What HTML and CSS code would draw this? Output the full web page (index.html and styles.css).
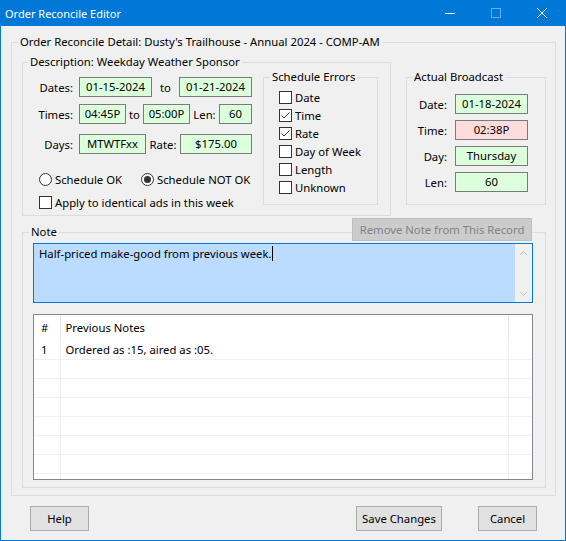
FILE: index.html
```
<!DOCTYPE html>
<html>
<head>
    <link rel="stylesheet" href="styles.css">
</head>
<body>
    <div class="window">
        <div class="titlebar">
            <span class="title">Order Reconcile Editor</span>
            <div class="caption-buttons">
                <span class="cap-btn">
                    <svg width="10" height="10" viewBox="0 0 10 10"><path d="M0 5.5H10" stroke="#fff" stroke-width="1"/></svg>
                </span>
                <span class="cap-btn">
                    <svg width="10" height="10" viewBox="0 0 10 10"><rect x="0.5" y="0.5" width="9" height="9" fill="none" stroke="#66aee7" stroke-width="1"/></svg>
                </span>
                <span class="cap-btn">
                    <svg width="10" height="10" viewBox="0 0 10 10"><path d="M0 0L10 10M10 0L0 10" stroke="#fff" stroke-width="1"/></svg>
                </span>
            </div>
        </div>

        <div class="client">
            <fieldset class="group outer">
                <legend>Order Reconcile Detail: Dusty's Trailhouse - Annual 2024 - COMP-AM</legend>

                <div class="top-row">
                    <fieldset class="group description">
                        <legend>Description: Weekday Weather Sponsor</legend>
                        <div class="desc-body">
                            <div class="schedule">
                                <div class="field-row row-dates">
                                    <span class="lbl">Dates:</span>
                                    <span class="field w73">01-15-2024</span>
                                    <span class="mid w27">to</span>
                                    <span class="field w73">01-21-2024</span>
                                </div>
                                <div class="field-row row-times">
                                    <span class="lbl">Times:</span>
                                    <span class="field w47">04:45P</span>
                                    <span class="mid w17">to</span>
                                    <span class="field w47">05:00P</span>
                                    <span class="mid w29">Len:</span>
                                    <span class="field w33">60</span>
                                </div>
                                <div class="field-row row-days">
                                    <span class="lbl">Days:</span>
                                    <span class="field w67">MTWTFxx</span>
                                    <span class="mid w34">Rate:</span>
                                    <span class="field w72">$175.00</span>
                                </div>

                                <div class="radios">
                                    <label class="radio first"><span class="dot"></span>Schedule OK</label>
                                    <label class="radio"><span class="dot checked"></span>Schedule NOT OK</label>
                                </div>
                                <label class="check apply"><span class="box"></span>Apply to identical ads in this week</label>
                            </div>

                            <fieldset class="group errors">
                                <legend>Schedule Errors</legend>
                                <label class="check"><span class="box"></span>Date</label>
                                <label class="check"><span class="box checked"><svg width="11" height="11" viewBox="0 0 11 11"><path d="M1.5 5.5L4 8L9.5 2.5" fill="none" stroke="#3c3c3c" stroke-width="1"/></svg></span>Time</label>
                                <label class="check"><span class="box checked"><svg width="11" height="11" viewBox="0 0 11 11"><path d="M1.5 5.5L4 8L9.5 2.5" fill="none" stroke="#3c3c3c" stroke-width="1"/></svg></span>Rate</label>
                                <label class="check"><span class="box"></span>Day of Week</label>
                                <label class="check"><span class="box"></span>Length</label>
                                <label class="check"><span class="box"></span>Unknown</label>
                            </fieldset>
                        </div>
                    </fieldset>

                    <fieldset class="group broadcast">
                        <legend>Actual Broadcast</legend>
                        <div class="field-row">
                            <span class="lbl">Date:</span>
                            <span class="field w73">01-18-2024</span>
                        </div>
                        <div class="field-row">
                            <span class="lbl">Time:</span>
                            <span class="field w73 bad">02:38P</span>
                        </div>
                        <div class="field-row">
                            <span class="lbl">Day:</span>
                            <span class="field w73">Thursday</span>
                        </div>
                        <div class="field-row">
                            <span class="lbl">Len:</span>
                            <span class="field w73">60</span>
                        </div>
                    </fieldset>
                </div>

                <div class="note-tools">
                    <button class="btn remove" disabled>Remove Note from This Record</button>
                </div>

                <fieldset class="group note">
                    <legend>Note</legend>
                    <div class="note-box">
                        <div class="note-text"><span class="caret">Half-priced make-good from previous week.</span></div>
                        <div class="scrollbar">
                            <svg width="9" height="6" viewBox="0 0 9 6"><path d="M1 5L4.5 1.5L8 5" fill="none" stroke="#c0c0c0" stroke-width="1"/></svg>
                            <svg width="9" height="6" viewBox="0 0 9 6"><path d="M1 1L4.5 4.5L8 1" fill="none" stroke="#c0c0c0" stroke-width="1"/></svg>
                        </div>
                    </div>

                    <div class="notes-grid">
                        <table>
                            <colgroup>
                                <col class="c-num">
                                <col class="c-note">
                                <col>
                            </colgroup>
                            <tr class="head">
                                <th>#</th>
                                <th>Previous Notes</th>
                                <th></th>
                            </tr>
                            <tr><td>1</td><td>Ordered as :15, aired as :05.</td><td></td></tr>
                            <tr><td></td><td></td><td></td></tr>
                            <tr><td></td><td></td><td></td></tr>
                            <tr><td></td><td></td><td></td></tr>
                            <tr><td></td><td></td><td></td></tr>
                            <tr><td></td><td></td><td></td></tr>
                            <tr><td></td><td></td><td></td></tr>
                            <tr><td></td><td></td><td></td></tr>
                        </table>
                    </div>
                </fieldset>
            </fieldset>

            <div class="buttons">
                <button class="btn help">Help</button>
                <button class="btn save">Save Changes</button>
                <button class="btn cancel">Cancel</button>
            </div>
        </div>
    </div>
</body>
</html>
```

FILE: styles.css
```
* {
    box-sizing: border-box;
}

body {
    margin: 0;
    font-family: "Noto Sans", "Liberation Sans", sans-serif;
    font-size: 11.3px;
    color: #000;
    background-color: #f0f0f0;
}

.window {
    width: 566px;
    height: 541px;
    border: 1px solid #0078d7;
    border-top: none;
    background-color: #f0f0f0;
}

.titlebar {
    height: 26px;
    background-color: #0078d7;
    color: #fff;
    display: flex;
    align-items: center;
}

.title {
    padding-left: 4px;
    font-size: 11px;
}

.caption-buttons {
    margin-left: auto;
    display: flex;
}

.cap-btn {
    width: 46px;
    height: 26px;
    display: flex;
    align-items: center;
    justify-content: center;
}

.client {
    padding: 8px 9px 0 10px;
}

/* group boxes */
.group {
    margin: 0;
    min-width: 0;
    border: 1px solid #dcdcdc;
}

.group legend {
    padding: 0 2px;
    line-height: 16px;
}

.outer {
    padding: 4px 9px 7px 10px;
}

.outer > legend {
    margin-left: -4px;
}

.top-row {
    display: flex;
    align-items: flex-start;
    gap: 15px;
}

.description {
    width: 369px;
    padding: 0 12px 5px 0;
}

.description > legend {
    margin-left: 5px;
}

.desc-body {
    display: flex;
    align-items: flex-start;
}

.schedule {
    width: 229px;
    padding-top: 7px;
}

.field-row {
    display: flex;
    align-items: center;
    height: 20px;
}

.row-times {
    margin-top: 7px;
}

.row-days {
    margin-top: 10px;
}

.lbl {
    width: 50px;
    margin-right: 6px;
    text-align: right;
}

.mid {
    text-align: center;
}

.field {
    height: 20px;
    line-height: 18px;
    border: 1px solid #7a7a7a;
    background-color: #dcffdc;
    text-align: center;
    white-space: nowrap;
}

.field.bad {
    background-color: #ffdcdc;
}

.w17 { width: 17px; }
.w27 { width: 27px; }
.w29 { width: 29px; }
.w33 { width: 33px; }
.w34 { width: 34px; }
.w47 { width: 47px; }
.w67 { width: 67px; }
.w72 { width: 72px; }
.w73 { width: 73px; }

.radios {
    display: flex;
    margin-top: 17px;
    padding-left: 16px;
}

.radio {
    display: flex;
    align-items: center;
    height: 16px;
    white-space: nowrap;
}

.radio.first {
    width: 102px;
}

.dot {
    width: 13px;
    height: 13px;
    border: 1px solid #333;
    border-radius: 50%;
    background-color: #fff;
    margin-right: 3px;
    display: flex;
    align-items: center;
    justify-content: center;
}

.dot.checked::after {
    content: "";
    width: 7px;
    height: 7px;
    border-radius: 50%;
    background-color: #333;
}

.check {
    display: flex;
    align-items: center;
    height: 18px;
    white-space: nowrap;
}

.box {
    width: 13px;
    height: 13px;
    border: 1px solid #333;
    background-color: #fff;
    margin-right: 3px;
    display: flex;
}

.apply {
    margin-top: 7px;
    padding-left: 16px;
    height: 16px;
}

.errors {
    width: 115px;
    margin: -1px 0 0 11px;
    padding: 3px 0 8px 15px;
}

.errors > legend {
    margin-left: -9px;
}

.broadcast {
    width: 140px;
    margin-top: 15px;
    padding: 9px 0 12px 0;
}

.broadcast > legend {
    margin-left: 5px;
}

.broadcast .lbl {
    width: 40px;
    margin-right: 8px;
}

.broadcast .field-row + .field-row {
    margin-top: 6px;
}

/* note */
.note-tools {
    display: flex;
    justify-content: flex-end;
    padding-right: 14px;
    margin: 2px 0 -17px;
}

.btn {
    font-family: inherit;
    font-size: 11.3px;
    color: #000;
    background-color: #e1e1e1;
    border: 1px solid #adadad;
    padding: 0;
    height: 25px;
}

.remove {
    position: relative;
    z-index: 1;
    width: 180px;
    height: 23px;
    background-color: #cccccc;
    border-color: #bfbfbf;
    color: #838383;
}

.note {
    padding: 3px 12px 7px 10px;
}

.note > legend {
    margin-left: -4px;
}

.note-box {
    height: 60px;
    border: 1px solid #0078d7;
    display: flex;
    background-color: #fff;
}

.note-text {
    flex: 1;
    background-color: #bbdcff;
    padding: 2px 5px;
    line-height: 16px;
}

.caret {
    border-right: 1px solid #000;
}

.scrollbar {
    width: 17px;
    background-color: #f0f0f0;
    display: flex;
    flex-direction: column;
    justify-content: space-between;
    align-items: center;
    padding: 6px 0 5px;
}

.notes-grid {
    margin-top: 11px;
    height: 166px;
    border: 1px solid #828790;
    background-color: #fff;
    overflow: hidden;
}

.notes-grid table {
    width: 100%;
    border-collapse: collapse;
    table-layout: fixed;
}

.c-num {
    width: 26px;
}

.c-note {
    width: 448px;
}

.notes-grid th,
.notes-grid td {
    padding: 0 0 0 5px;
    text-align: left;
    font-weight: normal;
    height: 19px;
    border-bottom: 1px solid #f0f0f0;
    border-right: 1px solid #f0f0f0;
    white-space: nowrap;
}

.notes-grid th:first-child,
.notes-grid td:first-child {
    padding-left: 7px;
}

.notes-grid .head th {
    height: 25px;
    border-bottom: none;
    border-right-color: #e5e5e5;
}

.notes-grid th:last-child,
.notes-grid td:last-child {
    border-right: none;
}

/* bottom buttons */
.buttons {
    display: flex;
    margin-top: 10px;
    padding: 0 19px;
}

.help {
    width: 59px;
}

.save {
    width: 86px;
    margin-left: auto;
}

.cancel {
    width: 59px;
    margin-left: 36px;
}
```
